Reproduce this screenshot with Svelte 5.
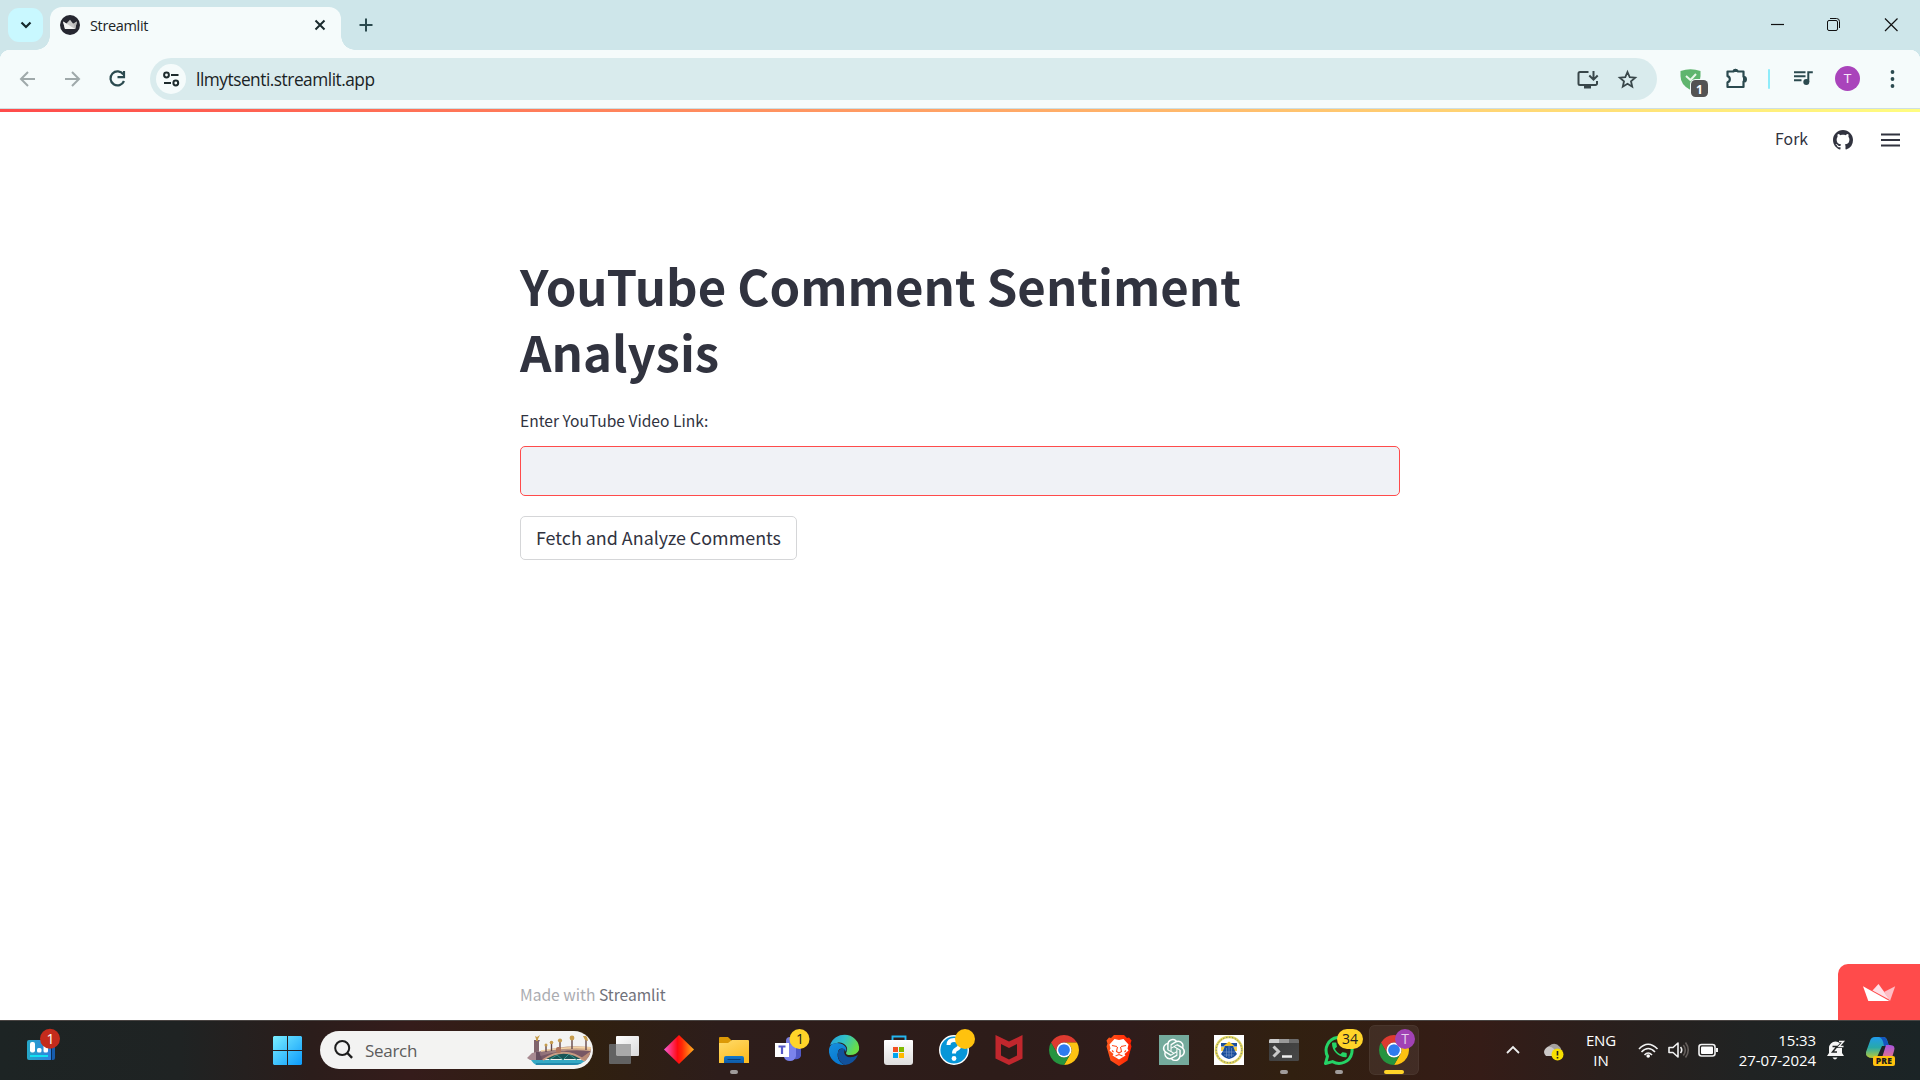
<script>
  const languages = ['ENG', 'IN'];
  const clock = ['15:33', '27-07-2024'];
  const phone =
    'M6.62 10.79c1.44 2.83 3.76 5.14 6.59 6.59l2.2-2.2c.27-.27.67-.36 1.02-.24 1.12.37 2.33.57 3.57.57.55 0 1 .45 1 1V20c0 .55-.45 1-1 1-9.39 0-17-7.61-17-17 0-.55.45-1 1-1h3.5c.55 0 1 .45 1 1 0 1.25.2 2.45.57 3.57.11.35.03.74-.25 1.02l-2.2 2.2z';
</script>

{#snippet chromeLogo()}
  <g transform="translate(10 10) scale(.625)">
    <path fill="#dd3a30" d="M3.22 12A24 24 0 0 1 44.78 12H24A12 12 0 0 0 13.61 30Z" />
    <path fill="#fdc212" d="M44.78 12A24 24 0 0 1 24 48L34.39 30A12 12 0 0 0 24 12Z" />
    <path fill="#25943f" d="M24 48A24 24 0 0 1 3.22 12L13.61 30A12 12 0 0 0 34.39 30Z" />
    <circle cx="24" cy="24" r="12" fill="#fff" />
    <circle cx="24" cy="24" r="9.4" fill="#2e7bee" />
  </g>
{/snippet}

{#snippet crown(a, b, c)}
  <path fill={b} d="M9.5 6.500 15.500 0 27 16z" />
  <path fill={c} d="M21 8 32.200 2.200 27 17z" />
  <path fill={a} d="M0 2.300 26.500 17H5.300z" />
{/snippet}

<div class="screen">
  <div class="tabstrip">
    <button class="tabsearch" aria-label="Search tabs">
      <svg width="35" height="34" viewBox="0 0 35 34"><path d="M13.500 14.500l4.500 4.500 4.500-4.500" fill="none" stroke="#15282b" stroke-width="2.200" /></svg>
    </button>
    <div class="tab">
      <svg width="20" height="20" viewBox="0 0 20 20">
        <circle cx="10" cy="10" r="10" fill="#262731" />
        <path d="M6.500 8.500 10 4.800l3.200 4L17 6.500 15.200 14H5L3 6.500z" fill="#c9c9c9" />
        <path d="M3 6.500 15 14H5z" fill="#f4f4f4" /><path d="M13.200 8.800 17 6.500 15.200 14z" fill="#b5b5b5" />
      </svg>
      <span class="title">Streamlit</span>
      <svg class="close" width="12" height="12" viewBox="0 0 12 12"><path d="M1.500 1.500l9 9M10.500 1.500l-9 9" stroke="#1b2b2e" stroke-width="2" /></svg>
    </div>
    <svg class="plus" width="14" height="14" viewBox="0 0 14 14"><path d="M7 .5v13M.5 7h13" stroke="#2b4a4f" stroke-width="2" /></svg>
    <svg class="winctl" width="160" height="50" viewBox="1760 0 160 50" fill="none" stroke="#111">
      <path d="M1771 24.500h13" stroke-width="1.200" />
      <rect x="1827.500" y="20.500" width="10" height="10" rx="1.500" />
      <path d="M1830 18.500h6.500a3 3 0 0 1 3 3V28" />
      <path d="M1885 18.500l12.500 12.500M1897.500 18.500L1885 31" stroke-width="1.200" />
    </svg>
  </div>

  <div class="toolbar">
    <svg width="150" height="58" viewBox="0 50 150 58" fill="none" stroke-width="2">
      <path d="M35 79H22M28 72l-7 7 7 7" stroke="#9fa9aa" />
      <path d="M65 79h13M72 72l7 7-7 7" stroke="#9fa9aa" />
      <path d="M123.300 74.500A7 7 0 1 0 124 81M124 71v6.200h-6.500" stroke="#2b4a4f" stroke-width="2.200" />
    </svg>
    <div class="omnibox">
      <svg width="30" height="30" viewBox="156 64 30 30" fill="none" stroke="#1d2b2d" stroke-width="2">
        <circle cx="171" cy="79" r="15" fill="#f5fbfb" stroke="none" />
        <circle cx="166.500" cy="75" r="2.400" /><path d="M171 75h7.500M164 83h7" /><circle cx="175.800" cy="83" r="2.400" />
      </svg>
      <span class="url">llmytsenti.streamlit.app</span>
      <svg width="80" height="42" viewBox="1567 58 80 42" fill="none" stroke="#39474a" stroke-width="2">
        <path d="M1588.500 72H1580a1.500 1.500 0 0 0-1.500 1.500v10A1.500 1.500 0 0 0 1580 85h15.500a1.500 1.500 0 0 0 1.500-1.500V81" />
        <path d="M1584 87h7" stroke-width="3" /><path d="M1593.500 71v8M1589.300 75.500l4.200 4.200 4.200-4.200" />
        <path d="M1627.500 72l2.200 5.100 5.500.5-4.200 3.700 1.200 5.400-4.700-2.900-4.700 2.900 1.200-5.400-4.200-3.700 5.500-.5z" stroke-width="1.800" />
      </svg>
    </div>
    <svg width="263" height="58" viewBox="1657 50 263 58" fill="none">
      <path d="M1680.500 71q10-3.500 20 0v5q0 9-10 14-10-5-10-14z" fill="#5fb56e" />
      <path d="M1686 76l4.500 4 5.500-6" stroke="#e8f7ea" stroke-width="2" />
      <rect x="1690" y="79" width="19" height="19" rx="5.500" fill="#f5fbfb" />
      <rect x="1691" y="80" width="17" height="17" rx="4.500" fill="#535353" />
      <text x="1699.500" y="93.500" class="count">1</text>
      <path d="M1729 71.500h4.500a2.500 2.500 0 0 1 4.500 0h5.500v5.300a2.400 2.400 0 0 1 0 4.800V87h-16v-4.600a3.300 3.300 0 0 0 0-6.300v-4.600z" stroke="#2b4a4f" stroke-width="2.200" stroke-linejoin="round" />
      <path d="M1733 71.500a2.300 2.300 0 0 1 4.600 0zM1743.500 77a2.300 2.300 0 0 1 0 4.600z" fill="#2b4a4f" stroke="#2b4a4f" />
      <rect x="1768" y="69" width="2" height="20" rx="1" fill="#8eecfa" />
      <path d="M1794 72.200h11.500M1794 76.200h11.500M1794 80.200h7.500" stroke="#2b4a4f" stroke-width="1.900" />
      <circle cx="1806.300" cy="82" r="3" fill="#2b4a4f" /><path d="M1808.300 82V72.200h4.500" stroke="#2b4a4f" stroke-width="2" />
      <circle cx="1847.500" cy="78.500" r="12.500" fill="#a944bb" />
      <text x="1847.500" y="83.300" class="initial">T</text>
      <g fill="#2b4a4f"><circle cx="1892.500" cy="72" r="1.900" /><circle cx="1892.500" cy="79" r="1.900" /><circle cx="1892.500" cy="86" r="1.900" /></g>
    </svg>
  </div>

  <div class="page">
    <div class="decoration"></div>
    <header>
      <span class="fork">Fork</span>
      <svg width="20" height="20" viewBox="0 0 16 16" fill="#31333f"><path d="M8 0C3.580 0 0 3.580 0 8c0 3.540 2.290 6.530 5.470 7.590.4.070.55-.17.55-.38 0-.19-.01-.82-.01-1.490-2.010.37-2.530-.49-2.690-.94-.09-.23-.48-.94-.82-1.130-.28-.15-.68-.52-.01-.53.63-.01 1.080.58 1.230.82.72 1.210 1.870.87 2.330.66.070-.52.28-.87.51-1.070-1.780-.2-3.640-.89-3.640-3.950 0-.87.31-1.590.82-2.150-.08-.2-.36-1.020.080-2.120 0 0 .67-.21 2.200.82.640-.18 1.320-.27 2-.27s1.360.090 2 .27c1.530-1.040 2.200-.82 2.200-.82.44 1.100.16 1.920.080 2.120.51.560.82 1.270.82 2.150 0 3.070-1.870 3.750-3.650 3.950.29.25.54.73.54 1.480 0 1.070-.01 1.930-.01 2.200 0 .21.150.46.55.38A8.010 8.010 0 0 0 16 8c0-4.420-3.580-8-8-8z" /></svg>
      <svg width="19" height="14" viewBox="0 0 19 14"><path d="M0 1.500h19M0 7h19M0 12.500h19" stroke="#31333f" stroke-width="2" /></svg>
    </header>
    <main>
      <h1>YouTube Comment Sentiment<br />Analysis</h1>
      <label for="link">Enter YouTube Video Link:</label>
      <input id="link" type="text" />
      <button class="fetch">Fetch and Analyze Comments</button>
    </main>
    <footer>
      <p>Made with <a href="#streamlit">Streamlit</a></p>
      <div class="badge"><svg width="33" height="17" viewBox="0 0 33 17">{@render crown('#fff', '#ffdfe6', '#ffbdc5')}</svg></div>
    </footer>
  </div>

  <div class="taskbar">
    <svg width="260" height="60" viewBox="0 1020 260 60">
      <defs><linearGradient id="wg" x2="1"><stop stop-color="#25a7c7" /><stop offset="1" stop-color="#2f7fe0" /></linearGradient></defs>
      <rect x="45" y="1040" width="10" height="20" rx="2" fill="#165cad" />
      <rect x="27" y="1040" width="25" height="20" rx="2" fill="url(#wg)" />
      <path d="M51.500 1048v12" stroke="#0a2c52" />
      <g fill="#fff"><rect x="30" y="1042" width="5" height="10.500" rx="2" /><rect x="37" y="1048" width="4.500" height="4.500" rx="1.500" /><rect x="43.500" y="1044" width="4.500" height="8.500" rx="1.500" /></g>
      <path d="M30 1056h18" stroke="#12e0f2" stroke-width="2" />
      <circle cx="50" cy="1038.700" r="10" fill="#c42b1c" /><text x="50.500" y="1043.800" class="bnum" fill="#fff">1</text>
    </svg>
    <svg width="60" height="60" viewBox="260 1020 60 60">
      <defs><linearGradient id="win" gradientUnits="userSpaceOnUse" x1="273" y1="1036" x2="302" y2="1065"><stop stop-color="#7aeeff" /><stop offset="1" stop-color="#0c9bfb" /></linearGradient></defs>
      <path fill="url(#win)" d="M274 1036h13v14h-14v-13zM288 1036h13l1 1v13h-14zM273 1051h14v14h-13l-1-1zM288 1051h14v13l-1 1h-13z" />
    </svg>
    <div class="search">
      <svg class="lens" width="20" height="20" viewBox="0 0 20 20"><circle cx="8.200" cy="8" r="7" fill="none" stroke="#1d1d1d" stroke-width="2" /><path d="M13.300 13l4.800 4.900" stroke="#1d1d1d" stroke-width="2.400" /></svg>
      <span>Search</span>
      <svg class="bridge" width="64" height="32" viewBox="527 1036 64 32">
        <defs><clipPath id="pill"><rect x="400" y="1033" width="191" height="34" rx="17" /></clipPath><linearGradient id="stone" x2="1"><stop stop-color="#8c6d78" /><stop offset="1" stop-color="#e4bb8f" /></linearGradient></defs>
        <g clip-path="url(#pill)">
          <path d="M531 1062h60v6h-52q-5-1-8-6z" fill="#35a9c4" /><path d="M536 1066h50" stroke="#1c7ea5" stroke-width="1.500" />
          <path d="M534 1042h6l-1 2v12h-5v-12z" fill="#80646c" /><path d="M527 1060l5-5 9-2 3 1v8h-14z" fill="#a78a91" /><path d="M536 1054h6v8h-6z" fill="#664e5e" />
          <path d="M540 1055q25-8 51-5v14h-6q-16-16-43-2z" fill="#785865" />
          <path d="M545 1061q18-12 38 0z" fill="#1b5657" /><path d="M549 1062l8-5 6 5 6-6 8 6" stroke="#39958e" fill="none" />
          <path d="M540 1056q25-8 51-5" stroke="url(#stone)" stroke-width="4" fill="none" /><path d="M541 1053q25-5 50-3" stroke="#f4d3a4" stroke-width="1.500" fill="none" />
          <path d="M543 1062q22-15 42 1" stroke="#c79b82" stroke-width="1.800" fill="none" />
          <path d="M591 1053v13l-10-6z" fill="#b98b76" />
          <path d="M546 1048v6M551.500 1045v8M560 1042v10M572 1040v11M586 1040v12" stroke="#65484a" stroke-width="1.400" />
          <g fill="#c69c4c"><path d="M535 1038l2 1 3-2-2 4v2h-2v-2z" /><circle cx="546" cy="1047" r="1.500" /><circle cx="551.500" cy="1044.500" r="1.800" /><circle cx="560" cy="1042.500" r="2.100" /><circle cx="572" cy="1040" r="2.400" /><path d="M583 1038h4l1 5-3-1z" /></g>
          <rect x="556" y="1049" width="5" height="6" rx="2" fill="#ad735d" />
        </g>
      </svg>
    </div>
    <div class="apps">
      <svg viewBox="0 0 50 50">
        <defs><linearGradient id="tv" x2="1" y2="1"><stop stop-color="#fff" /><stop offset="1" stop-color="#d9d9d9" /></linearGradient></defs>
        <rect x="17" y="11" width="23" height="20" rx="1" fill="url(#tv)" /><rect x="10" y="19" width="22" height="20" rx="1" fill="#626262" /><path d="M17 19h15v12H18l-1-1z" fill="#a9a9a9" />
      </svg>
      <svg viewBox="0 0 50 50">
        <defs><linearGradient id="dia" x2="1"><stop stop-color="#f65bd7" /><stop offset=".45" stop-color="#ff0a12" /><stop offset=".6" stop-color="#ff2a05" /><stop offset="1" stop-color="#ffb01f" /></linearGradient></defs>
        <path d="M25 10l15 14.500L25 39 10 24.500z" fill="url(#dia)" />
      </svg>
      <svg viewBox="0 0 50 50">
        <defs><linearGradient id="fo" y2="1" x2=".6"><stop stop-color="#ffdb6b" /><stop offset="1" stop-color="#fcbd24" /></linearGradient><linearGradient id="fb" x2="0" y2="1"><stop stop-color="#1278ca" /><stop offset="1" stop-color="#105aa7" /></linearGradient></defs>
        <path d="M10 13q0-1 1-1h8l4 4-3 5H10z" fill="#dc9906" /><path d="M10 18h9l4-3h16q1 0 1 1v22H10z" fill="url(#fo)" />
        <path d="M15 38v-5q0-2 2-2h16q2 0 2 2v5z" fill="url(#fb)" /><path d="M18.500 34.500h13" stroke="#073e79" />
        <rect class="run" x="21" y="45" width="8" height="4" rx="2" />
      </svg>
      <svg viewBox="0 0 50 50">
        <path d="M22 15h9v14a6 6 0 0 1-9 4z" fill="#777bdf" /><circle cx="26" cy="16" r="4" fill="#777bdf" /><path d="M30 22h7v9a6 6 0 0 1-7 3z" fill="#5058c5" />
        <path d="M20 20h12v11q-1 5-6 5t-6-4z" fill="#7b83eb" /><rect x="11" y="18" width="14" height="14" fill="#fff" /><path d="M14.500 21.500h7M18 21.500V29" stroke="#5659c8" stroke-width="2.200" />
        <circle cx="35.500" cy="14" r="10" fill="#ffd429" /><text x="36" y="19" class="bnum" fill="#222">1</text>
      </svg>
      <svg viewBox="0 0 50 50">
        <defs><linearGradient id="e1" x2="1" y2=".4"><stop stop-color="#249be0" /><stop offset=".5" stop-color="#31c1c7" /><stop offset="1" stop-color="#68dd48" /></linearGradient><linearGradient id="e2" x2=".5" y2="1"><stop stop-color="#1690dd" /><stop offset="1" stop-color="#0877d0" /></linearGradient></defs>
        <path d="M11 20C15 8 30 7 36 14q5 5 4 11-2 5-9 5-4 0-4-2c4-6-3-12-9-10q-5 1-7 2z" fill="url(#e1)" />
        <path d="M10 24q1-6 8-6c6 0 11 4 9 9-1-4-7-5-8 0-2 6 3 13 8 13-9 1-18-6-17-16z" fill="url(#e2)" />
        <path d="M19 27q2-5 7-3-2 4 1 7 4 3 12-1-4 9-13 10-8-3-7-13z" fill="#11519c" />
      </svg>
      <svg viewBox="0 0 50 50">
        <defs><linearGradient id="st" x2="0" y2="1"><stop stop-color="#fff" /><stop offset="1" stop-color="#dedede" /></linearGradient></defs>
        <path d="M18.500 16v-4.500h13V16" fill="none" stroke="#24b6ef" stroke-width="1.900" /><path d="M10 16q0-1 1-1h27q1 0 1 1v21q0 3-3 3H13q-3 0-3-3z" fill="url(#st)" />
        <path fill="#f25022" d="M19 22h5v5h-5z" /><path fill="#7fba00" d="M25 22h5v5h-5z" /><path fill="#00a4ef" d="M19 28h5v5h-5z" /><path fill="#ffb900" d="M25 28h5v5h-5z" />
      </svg>
      <svg viewBox="0 0 50 50">
        <circle cx="25" cy="25" r="14.300" fill="#0796d8" stroke="#fff" stroke-width="1.400" />
        <path d="M19.500 20q0-5 5.500-5 6 0 6 4.500 0 3-4 5-2 1-2 4" fill="none" stroke="#fff" stroke-width="4" /><circle cx="25" cy="33.500" r="2.400" fill="#fff" />
        <circle cx="36" cy="14" r="10" fill="#ffc20e" />
      </svg>
      <svg viewBox="0 0 50 50"><path fill-rule="evenodd" fill="#c1272d" d="M11.500 10L25 16.500 38.500 10v23.500L25 40l-13.500-6.500zM17 19v11.500l8 4 8-4V19l-8 4z" /></svg>
      <svg viewBox="0 0 50 50">{@render chromeLogo()}</svg>
      <svg viewBox="0 0 50 50">
        <defs><linearGradient id="br" x2="1"><stop stop-color="#ff5a1e" /><stop offset="1" stop-color="#ff2000" /></linearGradient></defs>
        <path d="M20 10h10l3 3 2-.5 2.500 3-1 3 1 3-4 14-8.500 5.500-8.500-5.500-4-14 1-3-1-3 2.500-3 2 .5z" fill="url(#br)" />
        <path d="M20.500 14l4.500 1 4.500-1 5 5.500-1 4 1 2-4 3.500 1 1.500-6.500 4-6.500-4 1-1.500-4-3.500 1-2-1-4z" fill="#fff" />
        <path d="M18 20.500l5 1M32 20.500l-5 1M23.500 22l-1 4.500 2.500 1.500 2.500-1.500-1-4.500M19.500 27l-1.500-1.500M30.500 27l1.500-1.500M21.500 31l3.500-1.500 3.500 1.500" stroke="#ff4a1c" stroke-width="1.100" fill="none" />
      </svg>
      <svg viewBox="0 0 50 50">
        <rect x="10" y="10" width="30" height="30" fill="#74aa9c" />
        <path transform="translate(13.800 13.800) scale(.93)" fill="#fff" d="M22.2819 9.8211a5.9847 5.9847 0 0 0-.5157-4.9108 6.0462 6.0462 0 0 0-6.5098-2.9A6.0651 6.0651 0 0 0 4.9807 4.1818a5.9847 5.9847 0 0 0-3.9977 2.9 6.0462 6.0462 0 0 0 .7427 7.0966 5.98 5.98 0 0 0 .511 4.9107 6.051 6.051 0 0 0 6.5146 2.9001A5.9847 5.9847 0 0 0 13.2599 24a6.0557 6.0557 0 0 0 5.7718-4.2058 5.9894 5.9894 0 0 0 3.9977-2.9001 6.0557 6.0557 0 0 0-.7475-7.0729zm-9.022 12.6081a4.4755 4.4755 0 0 1-2.8764-1.0408l.1419-.0804 4.7783-2.7582a.7948.7948 0 0 0 .3927-.6813v-6.7369l2.02 1.1686a.071.071 0 0 1 .038.052v5.5826a4.504 4.504 0 0 1-4.4945 4.4944zm-9.6607-4.1254a4.4708 4.4708 0 0 1-.5346-3.0137l.142.0852 4.783 2.7582a.7712.7712 0 0 0 .7806 0l5.8428-3.3685v2.3324a.0804.0804 0 0 1-.0332.0615L9.74 19.9502a4.4992 4.4992 0 0 1-6.1408-1.6464zM2.3408 7.8956a4.485 4.485 0 0 1 2.3655-1.9728V11.6a.7664.7664 0 0 0 .3879.6765l5.8144 3.3543-2.0201 1.1685a.0757.0757 0 0 1-.071 0l-4.8303-2.7865A4.504 4.504 0 0 1 2.3408 7.872zm16.5963 3.8558L13.1038 8.364 15.1192 7.2a.0757.0757 0 0 1 .071 0l4.8303 2.7913a4.4944 4.4944 0 0 1-.6765 8.1042v-5.6772a.79.79 0 0 0-.407-.667zm2.0107-3.0231l-.142-.0852-4.7735-2.7818a.7759.7759 0 0 0-.7854 0L9.409 9.2297V6.8974a.0662.0662 0 0 1 .0284-.0615l4.8303-2.7866a4.4992 4.4992 0 0 1 6.6802 4.66zM8.3065 12.863l-2.02-1.1638a.0804.0804 0 0 1-.038-.0567V6.0742a4.4992 4.4992 0 0 1 7.3757-3.4537l-.142.0805L8.704 5.459a.7948.7948 0 0 0-.3927.6813zm1.0976-2.3654l2.602-1.4998 2.6069 1.4998v2.9994l-2.5974 1.4997-2.6067-1.4997Z" />
      </svg>
      <svg viewBox="0 0 50 50">
        <rect x="10" y="10" width="30" height="30" fill="#fff" /><circle cx="25" cy="25" r="13" fill="none" stroke="#e2d65c" stroke-width="2.600" /><circle cx="25" cy="25" r="12.800" fill="none" stroke="#5c6c80" stroke-width=".9" stroke-dasharray="1.200 1.800" />
        <path d="M17 18h16v3.500H17z" fill="#1c4f9c" /><path d="M19.500 21l5.500-4.500 5.500 4.500z" fill="#f4c323" /><path d="M17 22h5v4h-5zM28 22h5v4h-5z" fill="#f0cb4a" />
        <path d="M21 21h8l2 5 2 3q-3 4-8 5-5-1-8-5l2-3z" fill="#174d9c" /><path d="M22.500 23v9M25 20v13M27.500 23v9M19 27h12M20 30h10" stroke="#7f9bca" stroke-width=".6" />
      </svg>
      <svg viewBox="0 0 50 50">
        <defs><linearGradient id="tm" x2="1" y2="1"><stop stop-color="#3c3c3c" /><stop offset="1" stop-color="#484848" /></linearGradient></defs>
        <rect x="10" y="14" width="30" height="22" rx="1.500" fill="url(#tm)" /><path d="M10 18v-2.500q0-1.500 1.500-1.500H20v4z" fill="#ccc" /><path d="M20 14h10v4H20z" fill="#999" /><path d="M30 14h8.500q1.500 0 1.500 1.500V18H30z" fill="#6b6b6b" />
        <path d="M14.500 21.500l5 5-5 5" stroke="#c9c9c9" stroke-width="3" fill="none" /><path d="M23 31.500h10" stroke="#eee" stroke-width="2.500" />
        <rect class="run" x="21" y="45" width="8" height="4" rx="2" />
      </svg>
      <svg viewBox="0 0 50 50">
        <path d="M11.500 38.500l2-7.200A13 13 0 1 1 18.500 36.600z" fill="none" stroke="#25d366" stroke-width="3" stroke-linejoin="round" />
        <path transform="translate(15.500 15) scale(.82)" d={phone} fill="#25d366" />
        <rect x="23" y="4" width="26" height="20" rx="10" fill="#ffd429" /><text x="36" y="19" class="bnum" fill="#222">34</text>
        <rect class="run" x="21" y="45" width="8" height="4" rx="2" />
      </svg>
      <svg viewBox="0 0 50 50">
        <rect x=".5" y=".5" width="49" height="49" rx="5" fill="#fff" fill-opacity=".07" stroke="#fff" stroke-opacity=".08" />
        {@render chromeLogo()}
        <circle cx="36" cy="14" r="10" fill="#a142b5" /><text x="36" y="18.800" class="bnum" fill="#e6cfec">T</text>
        <rect x="15" y="45" width="20" height="4" rx="2" fill="#ffd429" />
      </svg>
    </div>
    <svg class="tray" width="75" height="60" viewBox="1500 1020 75 60" fill="none">
      <path d="M1507 1053l6-6 6 6" stroke="#eee" stroke-width="1.800" />
      <path d="M1549 1056a5.500 5.500 0 0 1 0-10q6-5 11 1 3 4 0 8z" fill="#a5a1a0" /><path d="M1546 1056q-4-4 0-8 4-3 8 1l4 7z" fill="#cbc8c7" />
      <circle cx="1557.500" cy="1054.500" r="6" fill="#f8df00" /><path d="M1557.500 1051v4.500M1557.500 1057v1.500" stroke="#222" stroke-width="1.600" />
    </svg>
    <div class="lang">{#each languages as line}<span>{line}</span>{/each}</div>
    <svg width="96" height="60" viewBox="1630 1020 96 60" fill="none" stroke="#f2f2f2" stroke-width="1.600">
      <path d="M1639 1049q9-9.500 18.500 0M1641.500 1052q6.700-7 13.500 0M1644.500 1055q3.700-4 7.500 0" /><circle cx="1648.200" cy="1056" r="1.800" fill="#fff" stroke="none" />
      <path d="M1669 1047.500h4l5-4.500v14l-5-4.500h-4z" stroke-linejoin="round" /><path d="M1680.500 1047q2.500 3 0 6" /><path d="M1683.300 1045q4 5 0 10.500M1685.500 1042.500q5.500 7.500 0 15" stroke="#655f5c" />
      <rect x="1699" y="1044.500" width="16" height="11.500" rx="2.500" /><rect x="1701" y="1046.500" width="12" height="7.500" rx="1" fill="#fff" stroke="none" /><path d="M1717 1048v4" stroke-width="2" />
    </svg>
    <div class="clock">{#each clock as line}<span>{line}</span>{/each}</div>
    <svg width="104" height="60" viewBox="1816 1020 104 60">
      <defs>
        <linearGradient id="c1" x2="0" y2="1"><stop stop-color="#219bec" /><stop offset=".5" stop-color="#28a9a9" /><stop offset="1" stop-color="#b9cb36" /></linearGradient>
        <linearGradient id="c2" x2="0" y2="1"><stop stop-color="#a653df" /><stop offset="1" stop-color="#f57d73" /></linearGradient>
      </defs>
      <path d="M1829 1053v-5a6.500 6.500 0 0 1 13 0v5l2 3h-17z" fill="#f5f5f5" /><path d="M1832.500 1057.500h5q-2.500 4-5 0z" fill="#f5f5f5" />
      <path d="M1832.500 1046.500h4.500l-4.500 5.500h4.500" fill="none" stroke="#202424" stroke-width="1.500" /><path d="M1839 1041.500h4.500l-4.500 5h4.500" fill="none" stroke="#202424" stroke-width="3" /><path d="M1839 1041.500h4.500l-4.500 5h4.500" fill="none" stroke="#f5f5f5" stroke-width="1.400" />
      <path d="M1875 1037h8q3 0 4 3l2 6h-7l-4 9q-1 3-5 3-8 0-7-6l4-11q1-4 5-4z" fill="url(#c1)" /><path d="M1879 1037h4q3 0 4 3l2 6h-5q-1-8-5-9z" fill="#1455bc" />
      <path d="M1886 1045h4q6 0 4 6l-3 10h-10z" fill="url(#c2)" />
      <rect x="1873" y="1056" width="22" height="10" rx="2" fill="#ffc20e" /><text x="1884" y="1064.200" class="pre">PRE</text>
    </svg>
  </div>
</div>

<style>
  :global(body) { margin: 0; overflow: hidden; }
  .screen { width: 1920px; height: 1080px; display: flex; flex-direction: column; background: #fff; font-family: "Open Sans", "Noto Sans", sans-serif; color: #1b2426; }
  svg { display: block; flex: none; }
  button { border: 0; padding: 0; }
  .tabstrip { height: 50px; flex: none; display: flex; background: #cee6ea; }
  .tabsearch { width: 35px; height: 34px; margin: 8px 0 0 8px; border-radius: 11px; background: #c9f8ff; }
  .tab { position: relative; box-sizing: border-box; width: 291px; height: 43px; margin: 7px 0 0 7px; padding: 0 15px 7px 10px; display: flex; align-items: center; background: #f5fbfb; border-radius: 12px 12px 0 0; }
  .tab::before, .tab::after { content: ""; position: absolute; bottom: 0; width: 14px; height: 14px; }
  .tab::before { left: -14px; background: radial-gradient(circle at 0 0, transparent 13.5px, #f5fbfb 14px); }
  .tab::after { right: -14px; background: radial-gradient(circle at 100% 0, transparent 13.500px, #f5fbfb 14px); }
  .title { margin: 1px 0 0 10px; font-size: 14.5px; line-height: 20px; letter-spacing: -0.35px; }
  .close { margin-left: auto; }
  .plus { margin: 18px 0 0 18px; }
  .winctl { margin-left: auto; }
  .toolbar { height: 58px; flex: none; display: flex; align-items: center; border-bottom: 1px solid #cddfe3; background: radial-gradient(circle at 10px 10px, #f5fbfb 10px, #cee6ea 10.5px) 0 0 / 10px 10px no-repeat, radial-gradient(circle at 0 10px, #f5fbfb 10px, #cee6ea 10.5px) 100% 0 / 10px 10px no-repeat, #f5fbfb; }
  .omnibox { width: 1507px; height: 42px; box-sizing: border-box; padding: 0 10px 0 6px; border-radius: 21px; background: #d9ebed; display: flex; align-items: center; }
  .url { flex: 1; margin: 2px 0 0 10px; font-size: 17.3px; line-height: 24px; letter-spacing: -0.48px; color: #1a2325; }
  .count { font: 700 12px "Open Sans", sans-serif; fill: #fff; text-anchor: middle; }
  .initial { font: 400 13.5px Roboto, sans-serif; fill: #f6e8f8; text-anchor: middle; }
  .page { flex: 1; min-height: 0; display: flex; flex-direction: column; font-family: "Noto Sans CJK SC", sans-serif; color: #31333f; }
  .decoration { height: 3px; flex: none; background: linear-gradient(90deg, #ff4b4b, #fffd80); }
  header { height: 56px; flex: none; display: flex; align-items: center; justify-content: flex-end; padding-right: 20px; }
  .fork { font-size: 15.8px; line-height: 24px; margin: -2px 25px 0 0; }
  header svg + svg { margin-left: 28px; }
  main { width: 880px; margin: 84px auto 0; display: flex; flex-direction: column; align-items: flex-start; }
  h1 { margin: 0; font-size: 49.1px; font-weight: 700; line-height: 66px; white-space: nowrap; }
  label { font-size: 15.6px; line-height: 24px; margin-top: 24px; }
  input { box-sizing: border-box; width: 880px; height: 50px; margin-top: 14px; border: 1px solid #ff4b4b; border-radius: 5px; background: #f0f2f6; padding: 0 14px; }
  .fetch { box-sizing: border-box; width: 277px; height: 44px; margin-top: 20px; padding-bottom: 2px; border: 1px solid #d5d6d8; border-radius: 5px; background: #fff; font: 400 17.9px/26px "Noto Sans CJK SC", sans-serif; color: #31333f; white-space: nowrap; }
  footer { margin-top: auto; height: 56px; display: flex; align-items: center; padding-left: 520px; color: #abacb1; font-size: 15.6px; }
  p { margin: 4px 0 0; line-height: 24px; }
  a { color: #6f717a; text-decoration: none; }
  .badge { width: 82px; height: 56px; box-sizing: border-box; padding-top: 1px; margin-left: auto; border-radius: 10px 0 0; background: #ff4b4b; display: flex; align-items: center; justify-content: center; }
  .taskbar { height: 60px; box-sizing: border-box; flex: none; display: flex; align-items: center; box-shadow: inset 0 1px 0 #494442; background: linear-gradient(90deg, #1d2424 0, #1f2323 180px, #2b1d1b 310px, #351c1b 410px, #30200f 580px, #2d1d1b 720px, #2d1c19 1000px, #2f1c1b 1130px, #312010 1290px, #351c17 1480px, #2a1f1c 1600px, #202323 1750px, #1b2426 1920px); }
  .search { width: 273px; height: 38px; box-sizing: border-box; padding: 0 2px 0 14px; border-radius: 19px; background: #f3f3f2; display: flex; align-items: center; color: #5c5c5c; font-size: 17px; }
  .search span { margin-left: 11px; letter-spacing: -0.3px; }
  .bridge { margin-left: auto; }
  .apps { display: flex; gap: 5px; margin-left: 6px; }
  .apps svg { width: 50px; height: 50px; }
  .run { fill: #a09c9b; }
  .bnum { font: 400 14px "Open Sans", sans-serif; text-anchor: middle; }
  .tray { margin-left: auto; }
  .lang, .clock { display: flex; flex-direction: column; color: #fff; font-size: 15px; line-height: 20px; letter-spacing: -0.1px; margin-top: -1px; }
  .lang { width: 52px; padding-right: 3px; align-items: center; }
  .clock { width: 90px; align-items: flex-end; }
  .pre { font: 800 8.5px "Open Sans", sans-serif; letter-spacing: .3px; text-anchor: middle; fill: #1b1b1b; }
</style>
